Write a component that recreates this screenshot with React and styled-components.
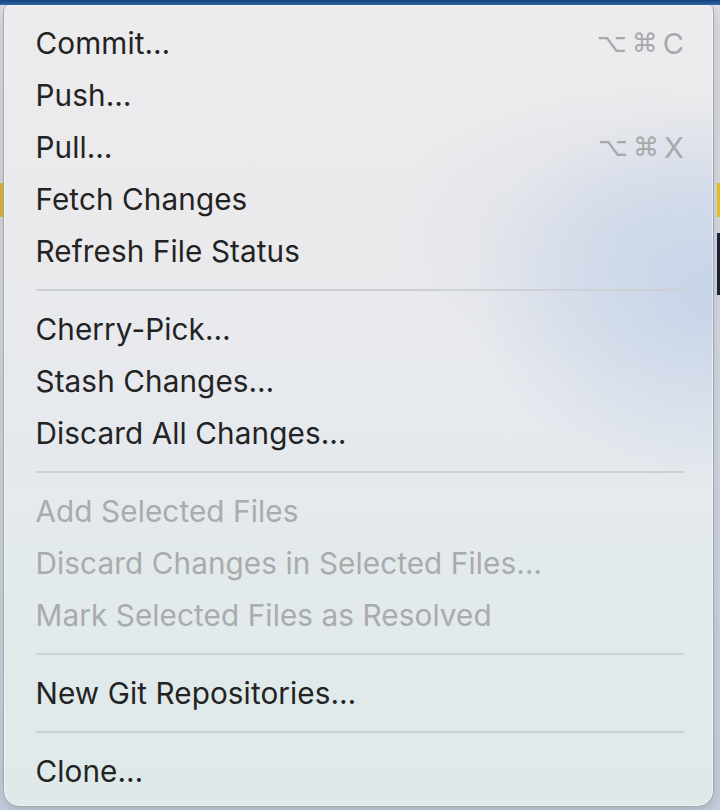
import React from 'react'
import styled, { createGlobalStyle } from 'styled-components'

const GlobalStyle = createGlobalStyle`
  html, body {
    margin: 0;
    padding: 0;
    background: #d6dbe3;
  }
  body {
    font-family: Inter, "Noto Sans", "Liberation Sans", sans-serif;
    -webkit-font-smoothing: antialiased;
  }
`

const items = [
  { label: 'Commit…', keys: ['⌥', '⌘', 'C'] },
  { label: 'Push…' },
  { label: 'Pull…', keys: ['⌥', '⌘', 'X'] },
  { label: 'Fetch Changes' },
  { label: 'Refresh File Status' },
  'sep',
  { label: 'Cherry-Pick…' },
  { label: 'Stash Changes…' },
  { label: 'Discard All Changes…' },
  'sep',
  { label: 'Add Selected Files', disabled: true },
  { label: 'Discard Changes in Selected Files…', disabled: true },
  { label: 'Mark Selected Files as Resolved', disabled: true },
  'sep',
  { label: 'New Git Repositories…' },
  'sep',
  { label: 'Clone…' },
]

function App() {
  return (
    <Screen>
      <GlobalStyle />
      <TitleStrip />
      <Desk>
        <LeftEdge>
          <EdgeBlock $color="#e3bf2c" $top={178} $height={34} />
        </LeftEdge>
        <Menu>
          {items.map((item, i) =>
            item === 'sep' ? (
              <Separator key={i} />
            ) : (
              <Item key={i} $disabled={item.disabled}>
                <span>{item.label}</span>
                {item.keys && (
                  <Shortcut>
                    {item.keys.map((k, j) => (
                      <Key key={j} $glyph={j < 2}>{k}</Key>
                    ))}
                  </Shortcut>
                )}
              </Item>
            )
          )}
        </Menu>
        <RightEdge>
          <EdgeBlock $color="#e6bd1f" $top={178} $height={34} />
          <EdgeBlock $color="#1b2237" $top={16} $height={62} />
        </RightEdge>
      </Desk>
    </Screen>
  )
}

export default App

const Screen = styled.div`
  width: 720px;
  height: 810px;
  overflow: hidden;
  display: flex;
  flex-direction: column;
  background: linear-gradient(180deg, #dfe1e6 0%, #d3dbe6 60%, #c9d3e2 100%);
`

const TitleStrip = styled.div`
  height: 5px;
  flex: none;
  background: linear-gradient(180deg, #17457c 0%, #2c6bb0 100%);
`

const Desk = styled.div`
  flex: 1;
  display: flex;
  align-items: flex-start;
`

const LeftEdge = styled.div`
  width: 3px;
  flex: none;
  display: flex;
  flex-direction: column;
`

const RightEdge = styled.div`
  flex: 1;
  display: flex;
  flex-direction: column;
  padding-left: 3px;
`

const EdgeBlock = styled.div`
  margin-top: ${p => p.$top}px;
  height: ${p => p.$height}px;
  background: ${p => p.$color};
`

const Menu = styled.div`
  width: 711px;
  height: 802px;
  box-sizing: border-box;
  padding: 12px 29px 10px 31.5px;
  border-radius: 6px 6px 16px 16px;
  border: 1.5px solid #a3a6ab;
  border-top: none;
  background:
    radial-gradient(ellipse 240px 190px at 710px 290px, rgba(196, 210, 232, 0.95), rgba(196, 210, 232, 0) 100%),
    radial-gradient(ellipse 260px 150px at 640px 230px, rgba(205, 215, 232, 0.55), rgba(205, 215, 232, 0) 100%),
    linear-gradient(180deg, #ecebed 0%, #eaeaec 30%, #e6e9ee 50%, #e2eaeb 75%, #dfe9ea 100%);
  box-shadow: inset 0 0 0 1px rgba(255, 255, 255, 0.45), 0 6px 18px rgba(0, 0, 0, 0.18);
  display: flex;
  flex-direction: column;
`

const Item = styled.div`
  height: 52px;
  flex: none;
  display: flex;
  align-items: center;
  justify-content: space-between;
  font-size: 29.7px;
  letter-spacing: 0.1px;
  color: ${p => (p.$disabled ? '#a9abad' : '#232323')};
  white-space: nowrap;
`

const Shortcut = styled.span`
  display: flex;
  align-items: center;
  gap: 3px;
  color: #a7a8aa;
`

const Key = styled.span`
  font-family: ${p => (p.$glyph ? '"DejaVu Sans", sans-serif' : 'Inter, "Liberation Sans", sans-serif')};
  font-size: ${p => (p.$glyph ? '26px' : '29px')};
  width: ${p => (p.$glyph ? '30px' : 'auto')};
  text-align: center;
`

const Separator = styled.div`
  height: 26px;
  flex: none;
  display: flex;
  align-items: center;

  &::before {
    content: '';
    flex: 1;
    height: 2px;
    background: #cdd0d4;
  }
`
